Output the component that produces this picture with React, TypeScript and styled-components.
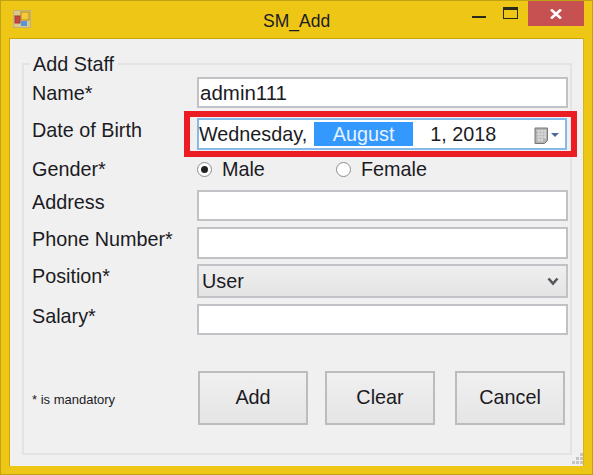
import React from 'react';
import styled, { createGlobalStyle } from 'styled-components';

const GlobalStyle = createGlobalStyle`
  html, body {
    margin: 0;
    padding: 0;
    background: #edc616;
  }
  * {
    box-sizing: border-box;
  }
`;

const FormWindow = styled.div`
  position: relative;
  width: 593px;
  height: 475px;
  display: flex;
  flex-direction: column;
  background: #edc616;
  border: 1px solid #bfa214;
  font-family: 'Liberation Sans', Arial, sans-serif;
  color: #1b1b24;
`;

const TitleBar = styled.div`
  position: relative;
  height: 37px;
  flex: none;
  display: flex;
  align-items: flex-start;
`;

const TitleIcon = styled.svg`
  width: 18px;
  height: 18px;
  margin: 9px 0 0 12px;
`;

const TitleText = styled.div`
  position: absolute;
  left: 262px;
  top: 10px;
  font-size: 17.5px;
  line-height: 20px;
`;

const WindowControls = styled.div`
  margin-left: auto;
  margin-right: 8px;
  display: flex;
`;

const ControlButton = styled.div<{ $width: number; $close?: boolean }>`
  width: ${(p) => p.$width}px;
  height: 25px;
  display: flex;
  align-items: center;
  justify-content: center;
  background: ${(p) => (p.$close ? '#c75050' : 'transparent')};
`;

const ClientArea = styled.div`
  flex: 1;
  margin: 0 8px 8px;
  padding: 14px 11px 11px 12px;
  background: #f0f0f0;
  border: 1px solid #c9a50e;
  border-right-color: #d8b512;
  border-bottom: none;
`;

const GroupBox = styled.fieldset`
  margin: 0;
  height: 100%;
  padding: 0;
  border: 2px solid #e3e3e3;
  min-width: 0;
`;

const GroupTitle = styled.legend`
  margin-left: 6px;
  padding: 0 4px 0 3px;
  font-size: 19.8px;
  line-height: 22px;
`;

const FormRow = styled.div<{ $gap: number; $height: number }>`
  display: flex;
  align-items: flex-start;
  margin-top: ${(p) => p.$gap}px;
  height: ${(p) => p.$height}px;
`;

const FieldLabel = styled.div<{ $shift: number }>`
  width: 173px;
  flex: none;
  padding-left: 8px;
  margin-top: ${(p) => p.$shift}px;
  font-size: 19.8px;
  line-height: 22px;
  white-space: nowrap;
`;

const TextBox = styled.input`
  width: 371px;
  height: 100%;
  border: 2px solid #c2c2c6;
  background: #fff;
  padding: 0 1px;
  font: inherit;
  font-size: 20.5px;
  color: inherit;
  outline: none;
`;

const DateField = styled.div`
  position: relative;
  width: 370px;
  height: 100%;
  display: flex;
  align-items: center;
  padding-left: 0;
  background: #fff;
  border: 2px solid #86b8ea;
  font-size: 19.8px;
`;

const Highlight = styled.div`
  position: absolute;
  inset: -9px -12px -9px -15px;
  border: 6px solid #ec1c24;
  pointer-events: none;
`;

const MonthPart = styled.span`
  width: 99px;
  height: 24px;
  margin: 0 17px 0 7px;
  background: #3399ff;
  color: #e8f2ff;
  line-height: 24px;
  text-align: center;
`;

const CalendarButton = styled.svg`
  position: absolute;
  right: 5px;
  top: 7px;
  width: 26px;
  height: 18px;
`;

const RadioGroup = styled.div`
  display: flex;
  align-items: center;
  height: 100%;
  font-size: 19.8px;
`;

const RadioOption = styled.label`
  width: 139px;
  display: flex;
  align-items: center;
  gap: 10px;
`;

const RadioDot = styled.span<{ $checked?: boolean }>`
  width: 15px;
  height: 15px;
  flex: none;
  border-radius: 50%;
  border: 1.5px solid #8d8d8d;
  background: #fff;
  display: flex;
  align-items: center;
  justify-content: center;
  &::after {
    content: '';
    width: 7px;
    height: 7px;
    border-radius: 50%;
    background: ${(p) => (p.$checked ? '#222' : 'transparent')};
  }
`;

const ComboBox = styled.div`
  width: 371px;
  height: 100%;
  display: flex;
  align-items: center;
  justify-content: space-between;
  padding: 0 7px 0 3px;
  border: 2px solid #c2c2c6;
  background: linear-gradient(#efefef, #e4e4e4);
  font-size: 19.8px;
`;

const FooterRow = styled.div`
  display: flex;
  align-items: center;
  margin-top: 36px;
  padding-left: 8px;
`;

const MandatoryNote = styled.div`
  width: 166px;
  flex: none;
  font-size: 13px;
  line-height: 16px;
  padding-top: 4px;
`;

const ActionButton = styled.button<{ $gap: number }>`
  width: 110px;
  height: 54px;
  margin-left: ${(p) => p.$gap}px;
  border: 2px solid #bcbcbc;
  background: linear-gradient(#f0f0f0, #e5e5e5);
  font: inherit;
  font-size: 19.8px;
  color: inherit;
  padding: 0 0 2px;
`;

const ResizeGrip = styled.svg`
  position: absolute;
  right: 9px;
  bottom: 9px;
  width: 12px;
  height: 12px;
`;

export default function App() {
  return (
    <>
      <GlobalStyle />
      <FormWindow>
        <TitleBar>
          <TitleIcon viewBox="0 0 18 18">
            <rect x="0.5" y="0.5" width="17" height="17" fill="#d8c88a" stroke="#c2b078" />
            <rect x="8" y="2" width="8" height="8" fill="#f6c93a" stroke="#b58a1c" />
            <rect x="2" y="6" width="5" height="7" fill="#c8443c" stroke="#a03a3a" />
            <rect x="8" y="11" width="6" height="5" fill="#5a94e0" />
          </TitleIcon>
          <TitleText>SM_Add</TitleText>
          <WindowControls>
            <ControlButton $width={30}>
              <svg width="16" height="4" viewBox="0 0 16 4" style={{ marginTop: 9 }}>
                <rect x="1" y="0" width="14" height="2" fill="#2a2a1c" />
              </svg>
            </ControlButton>
            <ControlButton $width={34}>
              <svg width="16" height="13" viewBox="0 0 16 13" style={{ marginTop: -1 }}>
                <rect x="0.5" y="0.5" width="14" height="11" fill="none" stroke="#2a2a1c" />
                <rect x="0" y="0" width="15" height="3" fill="#2a2a1c" />
              </svg>
            </ControlButton>
            <ControlButton $width={56} $close>
              <svg width="12" height="10" viewBox="0 0 12 10">
                <path d="M1 0.5 L11 9.5 M11 0.5 L1 9.5" stroke="#fff" strokeWidth="2.6" fill="none" />
              </svg>
            </ControlButton>
          </WindowControls>
        </TitleBar>
        <ClientArea>
          <GroupBox>
            <GroupTitle>Add Staff</GroupTitle>
            <FormRow $gap={2} $height={31}>
              <FieldLabel $shift={5}>Name*</FieldLabel>
              <TextBox value="admin111" readOnly />
            </FormRow>
            <FormRow $gap={10} $height={32}>
              <FieldLabel $shift={1}>Date of Birth</FieldLabel>
              <DateField>
                Wednesday,
                <MonthPart>August</MonthPart>
                1, 2018
                <CalendarButton viewBox="0 0 26 18">
                  <path d="M1 1h12.5v12.5l-3 3H1z" fill="#b4b4b4" stroke="#777" />
                  <path d="M3 4h9M3 7h9M3 10h9M3 13h6M5 3v12M8 3v12M11 3v9" stroke="#e8e8e8" strokeWidth="0.8" />
                  <path d="M17 6h8l-4 4z" fill="#4c6a94" />
                </CalendarButton>
                <Highlight />
              </DateField>
            </FormRow>
            <FormRow $gap={4} $height={30}>
              <FieldLabel $shift={4}>Gender*</FieldLabel>
              <RadioGroup>
                <RadioOption>
                  <RadioDot $checked />
                  Male
                </RadioOption>
                <RadioOption>
                  <RadioDot />
                  Female
                </RadioOption>
              </RadioGroup>
            </FormRow>
            <FormRow $gap={6} $height={31}>
              <FieldLabel $shift={1}>Address</FieldLabel>
              <TextBox readOnly />
            </FormRow>
            <FormRow $gap={6} $height={32}>
              <FieldLabel $shift={1}>Phone Number*</FieldLabel>
              <TextBox readOnly />
            </FormRow>
            <FormRow $gap={5} $height={34}>
              <FieldLabel $shift={1}>Position*</FieldLabel>
              <ComboBox>
                User
                <svg width="12" height="9" viewBox="0 0 12 9">
                  <path d="M1.5 1.5 L6 6.5 L10.5 1.5" fill="none" stroke="#55555c" strokeWidth="2.6" />
                </svg>
              </ComboBox>
            </FormRow>
            <FormRow $gap={6} $height={31}>
              <FieldLabel $shift={1}>Salary*</FieldLabel>
              <TextBox readOnly />
            </FormRow>
            <FooterRow>
              <MandatoryNote>* is mandatory</MandatoryNote>
              <ActionButton $gap={0}>Add</ActionButton>
              <ActionButton $gap={17}>Clear</ActionButton>
              <ActionButton $gap={20}>Cancel</ActionButton>
            </FooterRow>
          </GroupBox>
        </ClientArea>
        <ResizeGrip viewBox="0 0 12 12">
          <path d="M9 0h3v3H9zM5 4h3v3H5zM9 4h3v3H9zM1 8h3v3H1zM5 8h3v3H5zM9 8h3v3H9z" fill="#c4c4c4" />
        </ResizeGrip>
      </FormWindow>
    </>
  );
}
